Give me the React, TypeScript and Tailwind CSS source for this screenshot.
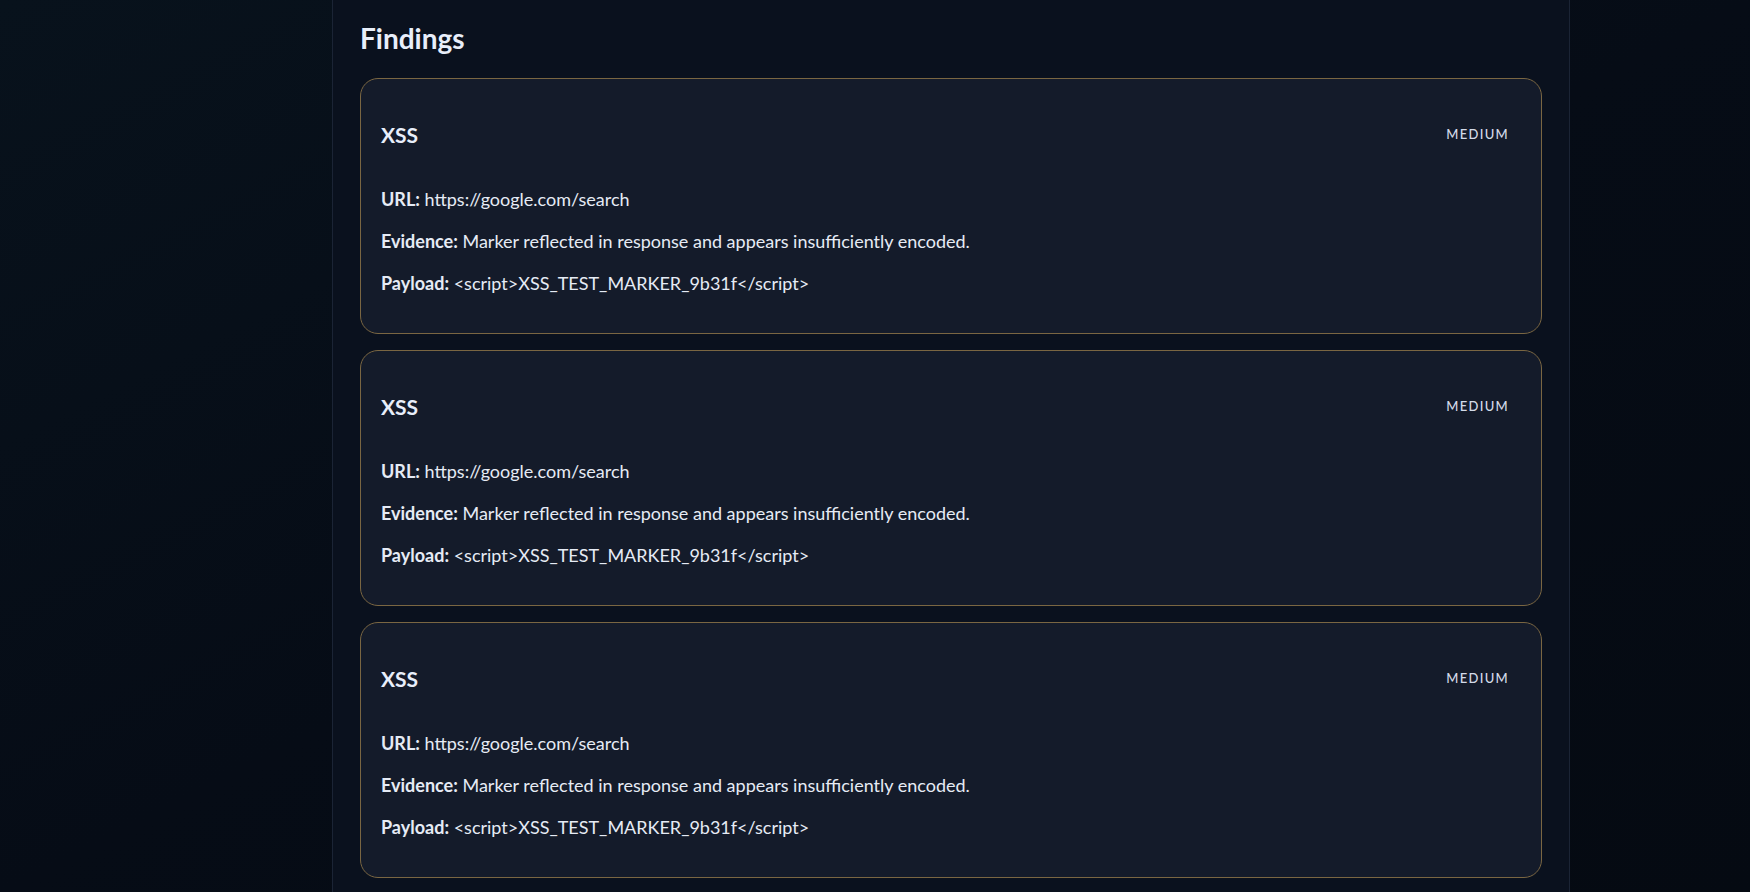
import React from 'react';

interface Finding {
  type: string;
  severity: string;
  url: string;
  evidence: string;
  payload: string;
}

const findings: Finding[] = Array.from({ length: 3 }, () => ({
  type: 'XSS',
  severity: 'Medium',
  url: 'https://google.com/search',
  evidence: 'Marker reflected in response and appears insufficiently encoded.',
  payload: '<script>XSS_TEST_MARKER_9b31f</script>',
}));

const FindingCard: React.FC<{ finding: Finding }> = ({ finding }) => (
  <div className="rounded-[18px] border border-[#7a6642] bg-[#141b2a] p-5">
    <div className="flex h-[72px] items-center justify-between">
      <h3 className="text-[21px] font-bold text-[#e8eefa]">{finding.type}</h3>
      <span className="px-3 text-[13px] font-medium uppercase tracking-[0.1em] text-[#d3dae8]">
        {finding.severity}
      </span>
    </div>
    <div className="flex flex-col gap-4 pt-[15px] pb-[17px] text-[18px] leading-[26px] text-[#e6ebf5]">
      <p>
        <span className="font-bold">URL:</span> {finding.url}
      </p>
      <p>
        <span className="font-bold">Evidence:</span> {finding.evidence}
      </p>
      <p>
        <span className="font-bold">Payload:</span> {finding.payload}
      </p>
    </div>
  </div>
);

export default function App() {
  return (
    <div
      className="flex h-screen overflow-hidden bg-gradient-to-br from-[#08121c] via-[#060c16] to-[#050a12]"
      style={{ fontFamily: 'Lato, "Noto Sans", sans-serif' }}
    >
      <div className="w-[332px] shrink-0" />
      <main className="w-[1238px] shrink-0 border-x border-[#1b2435] bg-[#0a111e] px-[27px] pt-[22px]">
        <h2 className="mb-[24px] text-[28px] leading-8 font-bold text-[#e8eefa]">Findings</h2>
        <div className="flex flex-col gap-4">
          {findings.map((f, i) => (
            <FindingCard key={i} finding={f} />
          ))}
        </div>
      </main>
    </div>
  );
}
